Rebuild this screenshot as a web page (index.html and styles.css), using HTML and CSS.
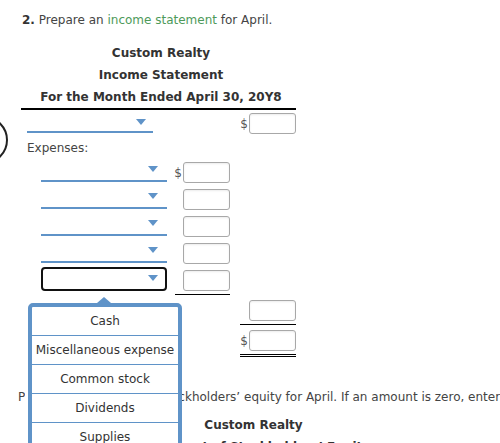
FILE: index.html
```html
<!DOCTYPE html>
<html lang="en">
<head>
    <meta charset="UTF-8">
    <title>Income Statement</title>
    <link rel="stylesheet" href="styles.css">
</head>
<body>

    <!-- Step marker, mostly off the left edge -->
    <span class="step-ring"></span>

    <div class="page">
        <p class="question"><b>2.</b> Prepare an <a class="term" href="#">income statement</a> for April.</p>

        <div class="statement">
            <div class="heading">
                <div>Custom Realty</div>
                <div>Income Statement</div>
                <div>For the Month Ended April 30, 20Y8</div>
            </div>

            <!-- Revenue -->
            <div class="row first">
                <div class="cell"><div class="dropdown top"><span class="caret"></span></div></div>
                <div class="cell amount"></div>
                <div class="cell amount"><span class="dollar">$</span><input class="amt" type="text"></div>
            </div>

            <div class="label-row">Expenses:</div>

            <div class="row">
                <div class="cell"><div class="dropdown"><span class="caret"></span></div></div>
                <div class="cell amount"><span class="dollar">$</span><input class="amt" type="text"></div>
                <div class="cell amount"></div>
            </div>
            <div class="row">
                <div class="cell"><div class="dropdown"><span class="caret"></span></div></div>
                <div class="cell amount"><input class="amt" type="text"></div>
                <div class="cell amount"></div>
            </div>
            <div class="row">
                <div class="cell"><div class="dropdown"><span class="caret"></span></div></div>
                <div class="cell amount"><input class="amt" type="text"></div>
                <div class="cell amount"></div>
            </div>
            <div class="row">
                <div class="cell"><div class="dropdown"><span class="caret"></span></div></div>
                <div class="cell amount"><input class="amt" type="text"></div>
                <div class="cell amount"></div>
            </div>
            <div class="row">
                <div class="cell"><div class="dropdown active"><span class="caret"></span></div></div>
                <div class="cell amount underline"><input class="amt" type="text"></div>
                <div class="cell amount"></div>
            </div>

            <!-- Total expenses -->
            <div class="row total">
                <div class="cell"></div>
                <div class="cell amount"></div>
                <div class="cell amount underline"><input class="amt" type="text"></div>
            </div>

            <!-- Net income -->
            <div class="row total">
                <div class="cell"></div>
                <div class="cell amount"></div>
                <div class="cell amount double"><span class="dollar">$</span><input class="amt" type="text"></div>
            </div>
        </div>

        <p class="question next">Prepare a statement of stockholders’ equity for April. If an amount is zero, enter "0".</p>

        <div class="heading wide">
            <div>Custom Realty</div>
            <div>Statement of Stockholders’ Equity</div>
        </div>
    </div>

    <!-- Open account picker -->
    <ul class="picker">
        <li>Cash</li>
        <li>Miscellaneous expense</li>
        <li>Common stock</li>
        <li>Dividends</li>
        <li>Supplies</li>
        <li>Fees earned</li>
    </ul>

</body>
</html>
```

FILE: styles.css
```css
body {
    margin: 0;
    font-family: "DejaVu Sans", Verdana, sans-serif;
    font-size: 12px;
    color: #333;
    background: #fff;
    position: relative;
    height: 443px;
    overflow: hidden;
}

.page {
    padding: 11px 0 0 21px;
}

.step-ring {
    position: absolute;
    left: -40px;
    top: 116px;
    width: 44px;
    height: 44px;
    border: 2px solid #222;
    border-radius: 50%;
}

.question {
    margin: 0 0 13px 1px;
    line-height: 18px;
    color: #444;
}

.question b {
    color: #333;
}

.question.next {
    margin: 31px 0 8px -3px;
    white-space: nowrap;
}

.term {
    color: #4e9a5a;
    text-decoration: none;
}

.statement {
    width: 275px;
}

.heading {
    text-align: center;
    font-weight: bold;
    line-height: 22px;
    padding-left: 5px;
    border-bottom: 2px solid #000;
}

.heading.wide {
    width: 455px;
    border-bottom: none;
}

.row {
    display: grid;
    grid-template-columns: 154px 55px 66px;
}

.cell {
    padding: 3px 0;
}

/* third column sits 10px clear of the second */
.row .cell:nth-child(3) {
    margin-left: 10px;
}

.row.first .cell {
    padding: 3px 0 4px;
}

.row.total .cell {
    padding: 5px 0 3px;
}

.amount {
    display: flex;
    justify-content: flex-end;
    align-items: center;
}

.underline {
    border-bottom: 1px solid #000;
}

.double {
    border-bottom: 3px double #000;
}

.label-row {
    padding-left: 6px;
    line-height: 21px;
    color: #444;
}

.dollar {
    color: #555;
    margin-right: 1px;
}

.amt {
    width: 47px;
    height: 21px;
    box-sizing: border-box;
    border: 1px solid #a8a8a8;
    border-radius: 3px;
    box-shadow: inset 0 1px 2px rgba(0, 0, 0, 0.08);
    padding: 0 3px;
    font: inherit;
    margin: 0;
}

/* Account dropdowns */
.dropdown {
    position: relative;
    width: 126px;
    height: 18px;
    margin-left: 20px;
    border-bottom: 2px solid #5f93c8;
}

.dropdown.top {
    margin-left: 6px;
}

.caret {
    position: absolute;
    right: 9px;
    top: 4px;
    width: 0;
    height: 0;
    border-left: 5px solid transparent;
    border-right: 5px solid transparent;
    border-top: 6px solid #5f93c8;
}

.dropdown.top .caret {
    right: 7px;
    top: 6px;
}

.dropdown.active {
    height: 24px;
    margin-top: -3px;
    box-sizing: border-box;
    border: 2px solid #111;
    border-radius: 4px;
}

.dropdown.active .caret {
    right: 7px;
    top: 6px;
}

/* Open list */
.picker {
    position: absolute;
    left: 28px;
    top: 303px;
    width: 154px;
    box-sizing: border-box;
    margin: 0;
    padding: 0;
    list-style: none;
    background: #fff;
    border: 4px solid #5f93c8;
    border-radius: 5px;
    box-shadow: -3px 0 0 #fff;
}

.picker::before {
    content: "";
    position: absolute;
    left: 65px;
    top: -10px;
    border-left: 7px solid transparent;
    border-right: 7px solid transparent;
    border-bottom: 6px solid #5f93c8;
}

.picker li {
    height: 28px;
    line-height: 28px;
    text-align: center;
    color: #333;
    border-bottom: 1px solid #5f93c8;
}
```
